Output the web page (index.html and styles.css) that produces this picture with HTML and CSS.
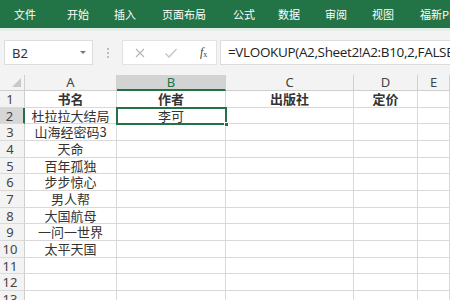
FILE: index.html
```html
<!DOCTYPE html>
<html lang="zh">
<head>
<meta charset="utf-8">
<link rel="stylesheet" href="styles.css">
</head>
<body>
<div class="app">
  <div class="ribbon">
    <span class="tab t1">文件</span>
    <span class="tab t2">开始</span>
    <span class="tab t3">插入</span>
    <span class="tab t4">页面布局</span>
    <span class="tab t5">公式</span>
    <span class="tab t6">数据</span>
    <span class="tab t7">审阅</span>
    <span class="tab t8">视图</span>
    <span class="tab t9">福新PDF</span>
  </div>
  <div class="fbar">
    <div class="namebox"><span>B2</span><span class="caret"></span></div>
    <div class="dots"><i></i><i></i><i></i></div>
    <div class="btns">
      <svg class="ic" width="12" height="12" viewBox="0 0 12 12"><path d="M2 2 L10 10 M10 2 L2 10" stroke="#b8b8b8" stroke-width="1.3" fill="none"/></svg>
      <svg class="ic" width="14" height="12" viewBox="0 0 14 12"><path d="M1.5 6.5 L5 10 L12.5 2" stroke="#c4c4c4" stroke-width="1.4" fill="none"/></svg>
      <span class="fx"><i>f</i><sub>x</sub></span>
    </div>
    <div class="formula">=VLOOKUP(A2,Sheet2!A2:B10,2,FALSE)</div>
  </div>
  <div class="sheet">
    <div class="corner"><span class="tri"></span></div>
    <div class="ch">A</div>
    <div class="ch sel">B</div>
    <div class="ch">C</div>
    <div class="ch">D</div>
    <div class="ch">E</div>

    <div class="rh">1</div><div class="c b">书名</div><div class="c b">作者</div><div class="c b">出版社</div><div class="c b">定价</div><div class="c"></div>
    <div class="rh sel">2</div><div class="c">杜拉拉大结局</div><div class="c active">李可<span class="handle"></span></div><div class="c"></div><div class="c"></div><div class="c"></div>
    <div class="rh">3</div><div class="c">山海经密码3</div><div class="c"></div><div class="c"></div><div class="c"></div><div class="c"></div>
    <div class="rh">4</div><div class="c">天命</div><div class="c"></div><div class="c"></div><div class="c"></div><div class="c"></div>
    <div class="rh">5</div><div class="c">百年孤独</div><div class="c"></div><div class="c"></div><div class="c"></div><div class="c"></div>
    <div class="rh">6</div><div class="c">步步惊心</div><div class="c"></div><div class="c"></div><div class="c"></div><div class="c"></div>
    <div class="rh">7</div><div class="c">男人帮</div><div class="c"></div><div class="c"></div><div class="c"></div><div class="c"></div>
    <div class="rh">8</div><div class="c">大国航母</div><div class="c"></div><div class="c"></div><div class="c"></div><div class="c"></div>
    <div class="rh">9</div><div class="c">一问一世界</div><div class="c"></div><div class="c"></div><div class="c"></div><div class="c"></div>
    <div class="rh">10</div><div class="c">太平天国</div><div class="c"></div><div class="c"></div><div class="c"></div><div class="c"></div>
    <div class="rh">11</div><div class="c"></div><div class="c"></div><div class="c"></div><div class="c"></div><div class="c"></div>
    <div class="rh">12</div><div class="c"></div><div class="c"></div><div class="c"></div><div class="c"></div><div class="c"></div>
    <div class="rh">13</div><div class="c"></div><div class="c"></div><div class="c"></div><div class="c"></div><div class="c"></div>
  </div>
</div>
</body>
</html>
```
FILE: styles.css
```css
* { box-sizing: border-box; }
html, body { margin: 0; padding: 0; }
body {
  width: 450px; height: 300px; overflow: hidden; background: #fff;
  font-family: "Noto Sans CJK SC", "Noto Sans", sans-serif;
}
.app { width: 450px; height: 300px; overflow: hidden; display: flex; flex-direction: column; }

.ribbon {
  height: 28px; flex: none; background: #227447; color: #fff;
  display: flex; align-items: center; font-size: 11px; white-space: nowrap;
}
.tab { flex: none; }
.t1 { margin-left: 14px; }
.t2 { margin-left: 31px; }
.t3 { margin-left: 25px; }
.t4 { margin-left: 26px; }
.t5 { margin-left: 27px; }
.t6 { margin-left: 23px; }
.t7 { margin-left: 25px; }
.t8 { margin-left: 25px; }
.t9 { margin-left: 26px; }

.fbar {
  height: 47px; flex: none; background: #f3f3f3;
  border-top: 3px solid #e4ede8;
  display: flex; align-items: flex-start; padding-top: 9px;
}
.namebox {
  margin-left: 4px; width: 89px; height: 25px; background: #fff;
  border: 1px solid #dcdcdc; display: flex; align-items: center;
  justify-content: space-between; padding: 0 6px 0 7px;
  font-size: 13px; color: #333; font-family: "Noto Sans", sans-serif;
}
.caret {
  width: 0; height: 0; border-left: 3px solid transparent; border-right: 3px solid transparent;
  border-top: 3px solid #777;
}
.dots { width: 29px; height: 25px; display: flex; flex-direction: column; align-items: center; justify-content: center; gap: 2px; }
.dots i { width: 2px; height: 2px; background: #bdbdbd; display: block; }
.btns {
  width: 95px; height: 25px; background: #fff; border: 1px solid #e2e2e2;
  display: flex; align-items: center; padding-left: 11px; gap: 18px;
}
.fx { font-family: "Liberation Serif", serif; font-size: 12px; color: #444; margin-left: 4px; }
.fx sub { font-size: 8px; vertical-align: -1px; }
.formula {
  margin-left: 3px; flex: 1; height: 25px; background: #fff; border: 1px solid #dcdcdc; border-right: none;
  font-size: 13.5px; color: #222; padding-left: 7px; line-height: 23px; white-space: nowrap; overflow: hidden;
  font-family: "Open Sans", "Noto Sans", sans-serif; letter-spacing: -0.35px;
}

.sheet {
  flex: 1; display: grid;
  grid-template-columns: 25px 92px 109px 128px 64px 1fr;
  grid-template-rows: 16px repeat(13, 16.67px);
  font-size: 13px; color: #333;
}
.corner { background: #f3f3f3; border-right: 1px solid #cfcfcf; border-bottom: 1px solid #cfcfcf; position: relative; }
.tri {
  position: absolute; right: 3px; bottom: 3px; width: 0; height: 0;
  border-left: 9px solid transparent; border-bottom: 9px solid #c9c9c9;
}
.ch {
  background: #f3f3f3; border-right: 1px solid #d0d0d0; border-bottom: 1px solid #cfcfcf;
  text-align: center; line-height: 15px; font-family: "Noto Sans", sans-serif; color: #444; font-size: 13px;
}
.ch.sel { background: #d3d3d3; border-bottom: 2px solid #217346; color: #217346; }
.rh {
  background: #f3f3f3; border-right: 1px solid #cfcfcf; border-bottom: 1px solid #dadada;
  text-align: center; font-family: "Noto Sans", sans-serif; color: #444; font-size: 13px;
  line-height: 16px; padding-right: 4px;
}
.rh.sel { background: #d6d6d6; border-right: 2px solid #217346; }
.c {
  border-right: 1px solid #d9d9d9; border-bottom: 1px solid #d9d9d9;
  text-align: center; line-height: 16px; white-space: nowrap; overflow: visible; position: relative;
}
.c.b { font-weight: bold; }
.c.active { outline: 2px solid #217346; outline-offset: -1px; z-index: 2; }
.handle {
  position: absolute; right: -4px; bottom: -4px; width: 5px; height: 5px;
  background: #217346; border: 1px solid #fff;
}
```
